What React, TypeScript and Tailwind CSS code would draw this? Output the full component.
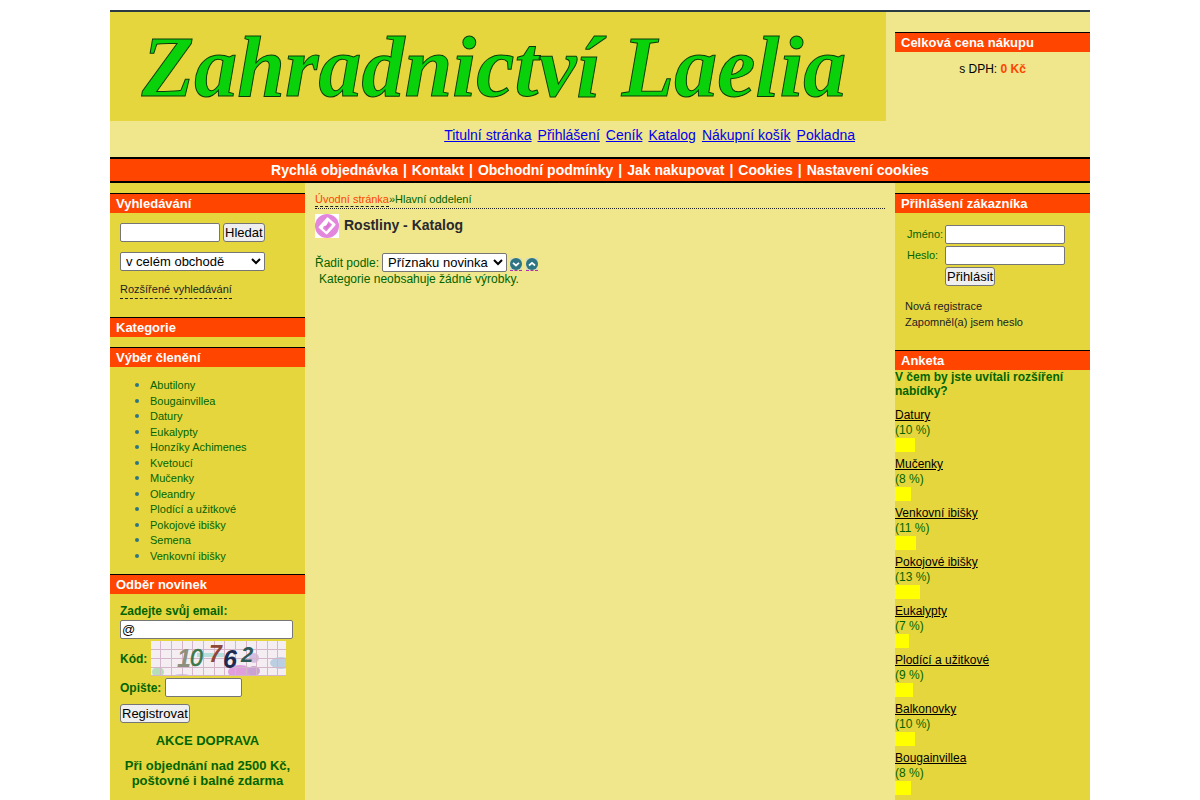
import { ReactNode } from "react";

const categories = [
  "Abutilony",
  "Bougainvillea",
  "Datury",
  "Eukalypty",
  "Honzíky Achimenes",
  "Kvetoucí",
  "Mučenky",
  "Oleandry",
  "Plodící a užitkové",
  "Pokojové ibišky",
  "Semena",
  "Venkovní ibišky",
];

const poll = [
  { name: "Datury", percent: 10, bar: 20 },
  { name: "Mučenky", percent: 8, bar: 16 },
  { name: "Venkovní ibišky", percent: 11, bar: 21 },
  { name: "Pokojové ibišky", percent: 13, bar: 25 },
  { name: "Eukalypty", percent: 7, bar: 14 },
  { name: "Plodící a užitkové", percent: 9, bar: 18 },
  { name: "Balkonovky", percent: 10, bar: 20 },
  { name: "Bougainvillea", percent: 8, bar: 16 },
];

const topLinks = ["Titulní stránka", "Přihlášení", "Ceník", "Katalog", "Nákupní košík", "Pokladna"];

const menuLinks = [
  "Rychlá objednávka",
  "Kontakt",
  "Obchodní podmínky",
  "Jak nakupovat",
  "Cookies",
  "Nastavení cookies",
];

const field = "h-[19px] rounded-[2px] border border-[#767676] bg-white px-px text-[13px] leading-4 text-black";
const button =
  "h-[19px] rounded-[3px] border border-[#767676] bg-[#efefef] px-px text-[13px] leading-4 text-black";

function BoxTitle({ children }: { children: ReactNode }) {
  return (
    <h2 className="h-5 border-t border-black bg-[#ff4500] pl-1.5 text-[13px] font-bold leading-[19px] text-white">
      {children}
    </h2>
  );
}

function Captcha() {
  const vertical = [9, 20, 31, 41, 52, 63, 73, 84, 95, 105, 116, 126];
  const horizontal = [8, 17, 26, 34];
  return (
    <svg width="135" height="35" viewBox="0 0 135 35" role="img" aria-label="Kontrolní kód">
      <rect width="135" height="35" fill="#f4eef2" />
      <ellipse cx="7" cy="31" rx="6" ry="5" fill="#b5ddb8" />
      <ellipse cx="89" cy="31" rx="12" ry="7" fill="#df9fdc" />
      <ellipse cx="103" cy="30" rx="6" ry="5" fill="#c9a2d4" />
      <ellipse cx="103" cy="17" rx="5" ry="5" fill="#d6bde2" />
      <ellipse cx="130" cy="22" rx="11" ry="6" fill="#bccfe2" />
      <ellipse cx="31" cy="35" rx="8" ry="2" fill="#cdbfe0" />
      <rect x="46" y="12" width="28" height="4" fill="#b4dfdc" />
      {vertical.map((x) => (
        <path key={x} d={`M${x + 0.5} 0V35`} stroke="#d3b6ca" strokeWidth="1" />
      ))}
      {horizontal.map((y) => (
        <path key={y} d={`M0 ${y + 0.5}H135`} stroke="#d3b6ca" strokeWidth="1" />
      ))}
      <g className="font-['Liberation_Sans'] font-bold italic">
        <text x="26" y="26" fontSize="25" fill="#8c907c">1</text>
        <text x="39" y="25" fontSize="23" fontWeight="400" fill="#3c7846" stroke="#3c7846" strokeWidth="0.6">0</text>
        <text x="58" y="21" fontSize="23" fill="#8f4538">7</text>
        <text x="72" y="27" fontSize="25" fill="#1f2b50">6</text>
        <text x="90" y="21" fontSize="22" fill="#2f5a58">2</text>
      </g>
    </svg>
  );
}

function CatalogIcon() {
  return (
    <svg width="24" height="24" viewBox="0 0 24 24" aria-hidden="true" className="shrink-0">
      <rect width="24" height="24" fill="#fff" />
      <circle cx="12" cy="12" r="12" fill="#e287dc" />
      <path
        d="M12.6 4.6 19.4 10.6 11.6 19.2 4.8 13.2Z"
        fill="#fff"
        stroke="#fff"
        strokeWidth="2.4"
        strokeLinejoin="round"
      />
      <path d="M13.3 7.3 17.2 10.8 11.2 17.4 7.9 14.4 8.9 11.9 12 11.6Z" fill="#e287dc" />
      <path d="M12.9 9.2 15.4 11.2 11.4 15.4 10 13Z" fill="#db72d4" />
    </svg>
  );
}

function SortArrow({ up = false }: { up?: boolean }) {
  return (
    <svg width="12" height="12" viewBox="0 0 12 12" aria-hidden="true" className="block">
      <rect width="12" height="12" fill="#d6dcc0" />
      <circle cx="6" cy="6" r="6" fill="#2e7583" />
      <path
        d={up ? "M3 7.5 6 4.8 9 7.5" : "M3 4.8 6 7.5 9 4.8"}
        fill="none"
        stroke="#fff"
        strokeWidth="1.7"
      />
    </svg>
  );
}

export default function App() {
  return (
    <div className="flex min-h-screen flex-col bg-white pt-2.5 font-['Liberation_Sans',Arial,sans-serif] text-xs text-[#006400]">
      <div className="mx-auto flex w-full max-w-[980px] grow flex-col border-t-2 border-[#2a3b43] bg-[#f0e68c]">
        <header className="grid grid-cols-[1fr_195px] gap-x-[9px]">
          <div>
            <div className="flex h-[109px] items-center justify-center bg-[#e6d63e] pr-2">
              <h1 className="whitespace-nowrap font-['Liberation_Serif',serif] text-[86px] font-bold italic leading-none text-[#0ad20a] [-webkit-text-stroke:1px_#0a3a0a]">
                Zahradnictví Laelia
              </h1>
            </div>
            <nav className="flex h-9 justify-end gap-1.5 pr-[31px] pt-1.5 text-[14px] leading-4">
              {topLinks.map((t) => (
                <a key={t} href="#" className="text-[#0000ee] underline">
                  {t}
                </a>
              ))}
            </nav>
          </div>
          <section className="pt-5">
            <BoxTitle>Celková cena nákupu</BoxTitle>
            <p className="pt-2.5 text-center leading-[14px] text-black">
              s DPH: <strong className="text-[#ff4500]">0 Kč</strong>
            </p>
          </section>
        </header>

        <nav className="flex h-[26px] items-center justify-center gap-[5px] border-y-2 border-black bg-[#ff4500] text-[14px] font-bold text-white">
          {menuLinks.map((t, i) => (
            <span key={t} className="flex gap-[5px]">
              {i > 0 && <span>|</span>}
              <a href="#">{t}</a>
            </span>
          ))}
        </nav>

        <div className="grid grow grid-cols-[195px_1fr_195px]">
          <aside className="bg-[#e6d63e] pt-2.5">
            <BoxTitle>Vyhledávání</BoxTitle>
            <form className="px-2.5 pb-[18px] pt-2.5">
              <div className="flex gap-[3px]">
                <input aria-label="Hledaný výraz" className={`${field} w-[100px]`} />
                <button type="button" className={button}>Hledat</button>
              </div>
              <select aria-label="Kde hledat" className={`${field} mt-2.5 block w-[145px]`}>
                <option>v celém obchodě</option>
              </select>
              <a href="#" className="mt-2.5 inline-block border-b border-dashed border-[#222] text-[11px] leading-[17px] text-[#222]">
                Rozšířené vyhledávání
              </a>
            </form>
            <BoxTitle>Kategorie</BoxTitle>
            <div className="h-2.5" />
            <BoxTitle>Výběr členění</BoxTitle>
            <ul className="mb-[11px] mt-[10px] flex h-[186px] list-disc flex-col justify-between pl-10 text-[11px] leading-[14px] marker:text-[14px] marker:text-[#2e7583]">
              {categories.map((c) => (
                <li key={c}>
                  <a href="#">{c}</a>
                </li>
              ))}
            </ul>
            <BoxTitle>Odběr novinek</BoxTitle>
            <form className="px-2.5 pt-2.5 font-bold">
              <label htmlFor="email" className="mb-[2px] block leading-[14px]">Zadejte svůj email:</label>
              <input id="email" defaultValue="@" className={`${field} block w-[173px] font-normal`} />
              <div className="mt-[2px] flex items-center gap-1">
                <span>Kód:</span>
                <Captcha />
              </div>
              <div className="mt-[2px] flex items-center gap-1">
                <label htmlFor="code">Opište:</label>
                <input id="code" className={`${field} w-[77px]`} />
              </div>
              <button type="button" className={`${button} mt-[7px] block font-normal`}>Registrovat</button>
            </form>
            <div className="pt-2.5 text-center text-[13px] font-bold leading-[15px]">
              <p>AKCE DOPRAVA</p>
              <p className="mt-2.5">
                Při objednání nad 2500 Kč,
                <br />
                poštovné i balné zdarma
              </p>
            </div>
          </aside>

          <main className="px-2.5 pt-2.5">
            <div className="flex h-4 items-start border-b border-dotted border-[#222] text-[11px] leading-[13px]">
              <a href="#" className="border-b border-dashed border-[#222] text-[#ff4500]">Úvodní stránka</a>
              <span>»Hlavní oddelení</span>
            </div>
            <div className="flex gap-[5px] pt-[5px]">
              <CatalogIcon />
              <h2 className="text-[14px] font-bold leading-[22px] text-[#28282f]">Rostliny - Katalog</h2>
            </div>
            <div className="flex items-center gap-[3px] pt-[15px]">
              <label htmlFor="sort">Řadit podle:</label>
              <select id="sort" className={`${field} w-[125px]`}>
                <option>Příznaku novinka</option>
              </select>
              <div className="mt-1 flex gap-1">
                <a href="#" aria-label="Sestupně" className="border-b border-dashed border-[#b030b0]">
                  <SortArrow />
                </a>
                <a href="#" aria-label="Vzestupně" className="border-b border-dashed border-[#b030b0]">
                  <SortArrow up />
                </a>
              </div>
            </div>
            <p className="pl-1 leading-[14px]">Kategorie neobsahuje žádné výrobky.</p>
          </main>

          <aside className="bg-[#e6d63e] pt-2.5">
            <BoxTitle>Přihlášení zákazníka</BoxTitle>
            <form className="grid grid-cols-[38px_1fr] items-center gap-y-[2px] pl-3 pt-3 text-[11px]">
              <label htmlFor="user">Jméno:</label>
              <input id="user" className={`${field} w-[120px]`} />
              <label htmlFor="pass">Heslo:</label>
              <input id="pass" type="password" className={`${field} w-[120px]`} />
              <button type="button" className={`${button} col-start-2 justify-self-start`}>Přihlásit</button>
            </form>
            <div className="flex flex-col items-start px-2.5 pb-5 pt-3 text-[11px] leading-4 text-[#222]">
              <a href="#">Nová registrace</a>
              <a href="#">Zapomněl(a) jsem heslo</a>
            </div>
            <BoxTitle>Anketa</BoxTitle>
            <p className="font-bold leading-[14px]">V čem by jste uvítali rozšíření nabídky?</p>
            <ul className="flex flex-col gap-1 pt-[9px]">
              {poll.map((p) => (
                <li key={p.name}>
                  <a href="#" className="block leading-4 text-black underline">{p.name}</a>
                  <p className="leading-[15px]">({p.percent} %)</p>
                  <div className="h-[14px] bg-[#ffff00]" style={{ width: p.bar }} />
                </li>
              ))}
            </ul>
          </aside>
        </div>
      </div>
    </div>
  );
}
